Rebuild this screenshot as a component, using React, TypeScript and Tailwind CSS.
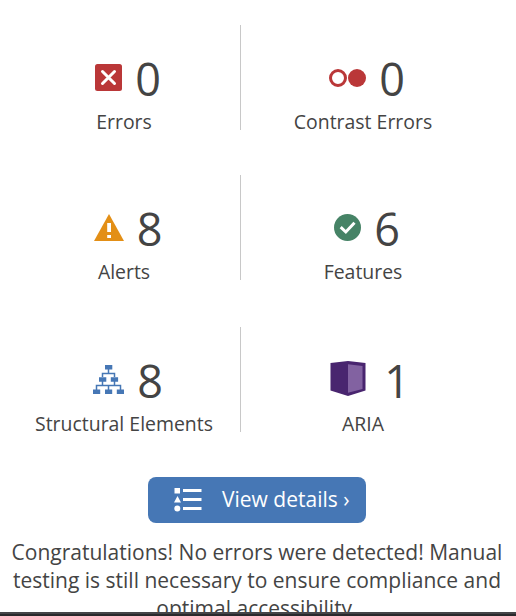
import type { ReactNode } from "react";

const ErrorIcon = () => (
  <svg width="27" height="27" viewBox="0 0 27 27">
    <rect width="27" height="27" rx="2.5" fill="#ba3738" />
    <path d="M7.5 7.5 19.5 19.5M19.5 7.5 7.5 19.5" stroke="#fff" strokeWidth="3" strokeLinecap="round" />
  </svg>
);

const ContrastIcon = () => (
  <svg width="37" height="18" viewBox="0 0 37 18">
    <circle cx="9" cy="9" r="7.5" fill="none" stroke="#ba3738" strokeWidth="3" />
    <circle cx="28" cy="9" r="9" fill="#ba3738" />
  </svg>
);

const AlertIcon = () => (
  <svg width="30" height="27" viewBox="0 0 30 27">
    <path d="M15 0 30 27H0Z" fill="#e38f16" />
    <path d="M13.2 9h3.8v9h-3.8zM13.2 21h3.8v3h-3.8z" fill="#fff" />
  </svg>
);

const FeatureIcon = () => (
  <svg width="27" height="27" viewBox="0 0 27 27">
    <circle cx="13.5" cy="13.5" r="13.5" fill="#468366" />
    <path d="M6.7 13.2 11.8 18 20.5 8.8" fill="none" stroke="#fff" strokeWidth="3" />
  </svg>
);

const StructureIcon = () => (
  <svg width="31" height="29" viewBox="0 0 31 29">
    <path d="M15.5 4v4M9.5 12V8.5h12V12M9.5 16v4M21.5 16v4M3.5 25v-4.5h24V25M15.5 20v5" fill="none" stroke="#4677b5" strokeWidth="1.5" />
    <path d="M12 0h7.3v4.6H12zM6 12.2h7.3v4.6H6zM17.8 12.2h7.3v4.6h-7.3zM0 24.5h7.2V29H0zM12 24.5h7.2V29H12zM23.8 24.5H31V29h-7.2z" fill="#4677b5" />
  </svg>
);

const AriaIcon = () => (
  <svg width="36" height="35" viewBox="0 0 36 35">
    <path d="M.5 2 18 0 35.5 2V29.5L18 35 .5 29.5Z" fill="#49256f" />
    <path d="M18 3.3 32.5 5V28L18 31.8Z" fill="#8262a1" />
  </svg>
);

const ListIcon = () => (
  <svg width="28" height="25" viewBox="0 0 28 25" fill="#fff">
    <path d="M.5 1H6v5.5H.5zM3.5 9 7 15.5H0ZM9 2h18.5v3H9zM9 11h18.5v3H9zM9 20h18.5v3H9z" />
    <circle cx="3.3" cy="21.5" r="3" />
  </svg>
);

function Stat({ icon, count, label, iconBox }: { icon: ReactNode; count: number; label: string; iconBox: string }) {
  return (
    <div className="flex h-[105px] flex-col items-center">
      <div className="mt-[23px] flex h-[60px] items-center gap-[13px] pl-[8px]">
        <span className={iconBox}>{icon}</span>
        <span className="pt-[2px] text-[45px] leading-[60px]">{count}</span>
      </div>
      <div className="text-[19.45px] leading-[28px] whitespace-nowrap">{label}</div>
    </div>
  );
}

export default function App() {
  return (
    <main className="flex h-[616px] w-[516px] flex-col overflow-hidden bg-white font-['Open_Sans',sans-serif] text-[#444]">
      <div className="h-[587px] grow overflow-hidden">
        <div className="ml-[8px] grid w-[477px] grid-cols-[233px_244px] pt-[25px]">
          <div className="mb-[45px] border-r border-[#c8c8c8]">
            <Stat icon={<ErrorIcon />} count={0} label="Errors" iconBox="pb-[2px]" />
          </div>
          <Stat icon={<ContrastIcon />} count={0} label="Contrast Errors" iconBox="" />
          <div className="mb-[47px] border-r border-[#c8c8c8]">
            <Stat icon={<AlertIcon />} count={8} label="Alerts" iconBox="pb-[2px]" />
          </div>
          <Stat icon={<FeatureIcon />} count={6} label="Features" iconBox="pb-[2px]" />
          <div className="mb-[45px] border-r border-[#c8c8c8]">
            <Stat icon={<StructureIcon />} count={8} label="Structural Elements" iconBox="pb-[2px]" />
          </div>
          <Stat icon={<AriaIcon />} count={1} label="ARIA" iconBox="ml-[6px] mr-[5px] pb-[3px]" />
        </div>
        <button className="ml-[148px] flex h-[46px] w-[218px] items-center rounded-lg bg-[#4677b5] pb-[2px] pl-[26px] text-[21px] text-white">
          <ListIcon />
          <span className="ml-5 leading-[44px] whitespace-nowrap">View details ›</span>
        </button>
        <p className="mt-[15px] ml-[-2px] text-center text-[21px] leading-[28px] whitespace-nowrap">
          Congratulations! No errors were detected! Manual
          <br />
          testing is still necessary to ensure compliance and
          <br />
          optimal accessibility.
        </p>
      </div>
      <div className="h-1 shrink-0 border-t-2 border-[#454548] bg-[#29292c]" />
    </main>
  );
}
